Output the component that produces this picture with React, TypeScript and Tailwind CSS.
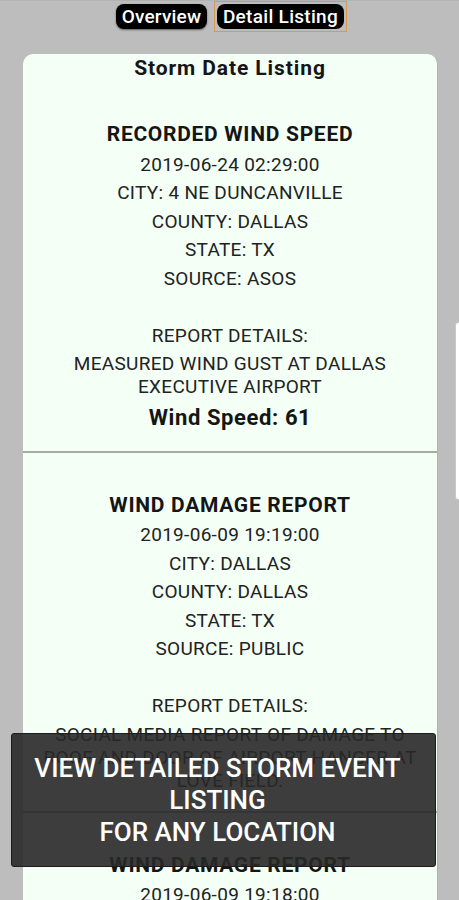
import React from "react";

type Item = {
  title: string;
  date: string;
  city: string;
  county: string;
  state: string;
  source: string;
  details: string;
  speed?: string;
};

const items: Item[] = [
  {
    title: "RECORDED WIND SPEED",
    date: "2019-06-24 02:29:00",
    city: "4 NE DUNCANVILLE",
    county: "DALLAS",
    state: "TX",
    source: "ASOS",
    details: "MEASURED WIND GUST AT DALLAS EXECUTIVE AIRPORT",
    speed: "61",
  },
  {
    title: "WIND DAMAGE REPORT",
    date: "2019-06-09 19:19:00",
    city: "DALLAS",
    county: "DALLAS",
    state: "TX",
    source: "PUBLIC",
    details: "SOCIAL MEDIA REPORT OF DAMAGE TO ROOF AND DOOR OF AIRPORT HANGER AT LOVE FIELD.",
  },
  {
    title: "WIND DAMAGE REPORT",
    date: "2019-06-09 19:18:00",
    city: "DALLAS",
    county: "DALLAS",
    state: "TX",
    source: "PUBLIC",
    details: "SOCIAL MEDIA REPORT OF DAMAGE.",
  },
];

const line = "text-[19px] leading-[23px] tracking-[0.3px] text-[#222]";

function Entry({ item, last }: { item: Item; last: boolean }) {
  return (
    <div
      className={
        "flex flex-col items-center gap-[5.5px] px-[14px] pt-[39px] pb-[19px] text-center " +
        (last ? "" : "border-b-2 border-[#a3ada3]")
      }
    >
      <div className="text-[21px] leading-[26px] font-bold tracking-[0.7px] text-[#151515]">{item.title}</div>
      <div className={line}>{item.date}</div>
      <div className={line}>CITY: {item.city}</div>
      <div className={line}>COUNTY: {item.county}</div>
      <div className={line}>STATE: {item.state}</div>
      <div className={line}>SOURCE: {item.source}</div>
      <div className="h-[23px]" />
      <div className={line}>REPORT DETAILS:</div>
      <div className={line}>{item.details}</div>
      {item.speed && (
        <div className="text-[22px] leading-[28px] font-bold tracking-[0.6px] text-[#151515]">
          Wind Speed: {item.speed}
        </div>
      )}
    </div>
  );
}

export default function App() {
  return (
    <div
      className="relative h-[900px] w-[459px] overflow-hidden bg-[#bdbdbd]"
      style={{ fontFamily: "Roboto, 'Noto Sans', sans-serif" }}
    >
      <div className="h-[1px] bg-[#b3b3b3]" />
      <div className="flex items-start pl-[116px] gap-[7px]">
        <button className="mt-[3px] h-[25px] w-[91px] rounded-[8px] bg-black text-[19px] leading-[25px] font-medium tracking-[0.2px] text-white shadow-[0_1px_2px_rgba(0,0,0,0.5)]">
          Overview
        </button>
        <div className="border border-[#d69a52] p-[2px]">
          <button className="block h-[25px] w-[127px] rounded-[8px] bg-black text-[19px] leading-[25px] font-medium tracking-[0.3px] text-white">
            Detail Listing
          </button>
        </div>
      </div>

      <div className="ml-[23px] mt-[22px] w-[415px] rounded-t-[10px] border-r border-[#aab5aa] bg-[#f4fff6]">
        <div className="text-center text-[21px] leading-[28px] font-bold tracking-[0.9px] text-[#151515]">
          Storm Date Listing
        </div>
        {items.map((it, i) => (
          <Entry key={i} item={it} last={i === items.length - 1} />
        ))}
      </div>

      <div className="absolute right-0 top-[322px] h-[178px] w-[4px] rounded-l-[3px] border border-r-0 border-[#c8c8c8] bg-white" />

      <div className="absolute left-[11px] top-[733px] flex h-[134px] w-[425px] items-center justify-center rounded-[3px] border border-[#1c1c1c] bg-[rgba(40,40,40,0.9)] pr-[12px]">
        <div className="text-center text-[26px] leading-[32px] font-medium text-white">
          VIEW DETAILED STORM EVENT
          <br />
          LISTING
          <br />
          FOR ANY LOCATION
        </div>
      </div>
    </div>
  );
}
